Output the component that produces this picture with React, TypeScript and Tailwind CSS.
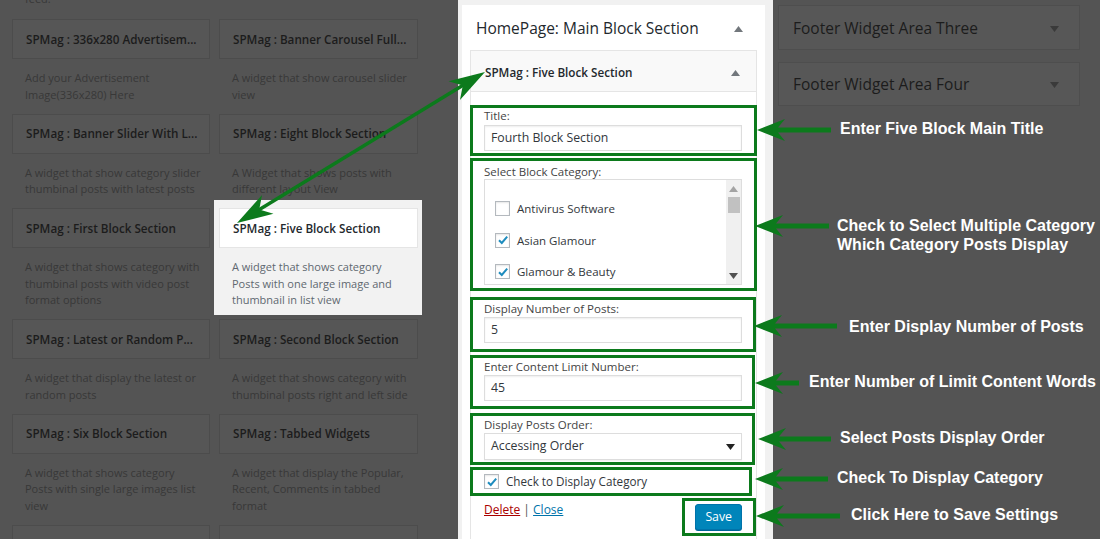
import React from 'react';

type Widget = { title: string; lines: string[]; active?: boolean };

const rows: Widget[][] = [
    [
        { title: 'SPMag : 336x280 Advertisem...', lines: ['Add your Advertisement', 'Image(336x280) Here'] },
        { title: 'SPMag : Banner Carousel Full...', lines: ['A widget that show carousel slider', 'view'] },
    ],
    [
        { title: 'SPMag : Banner Slider With L...', lines: ['A widget that show category slider', 'thumbinal posts with latest posts'] },
        { title: 'SPMag : Eight Block Section', lines: ['A Widget that shows posts with', 'different layout View'] },
    ],
    [
        { title: 'SPMag : First Block Section', lines: ['A widget that shows category with', 'thumbinal posts with video post', 'format options'] },
        { title: 'SPMag : Five Block Section', lines: ['A widget that shows category', 'Posts with one large image and', 'thumbnail in list view'], active: true },
    ],
    [
        { title: 'SPMag : Latest or Random P...', lines: ['A widget that display the latest or', 'random posts'] },
        { title: 'SPMag : Second Block Section', lines: ['A widget that shows category with', 'thumbinal posts right and left side'] },
    ],
    [
        { title: 'SPMag : Six Block Section', lines: ['A widget that shows category', 'Posts with single large images list', 'view'] },
        { title: 'SPMag : Tabbed Widgets', lines: ['A widget that display the Popular,', 'Recent, Comments in tabbed', 'format'] },
    ],
    // next row only shows the top of its cards
    [
        { title: '', lines: [] },
        { title: '', lines: [] },
    ],
];

const GREEN = '#0c7a1c';

const WidgetItem = ({ w }: { w: Widget }) => {
    if (w.active) {
        return (
            <div className="-mt-2 -ml-[5px] -mr-1 pt-2 pl-[5px] pr-1 bg-[#f2f2f2] self-start">
                <div className="h-10 border border-[#e5e5e5] bg-white flex items-center px-[13px] pt-px text-[11.7px] font-semibold text-[#23282d] whitespace-nowrap">
                    {w.title}
                </div>
                <div className="pt-[11px] pb-[6px] px-[13px] text-[11px] leading-[16.5px] text-[#606870] whitespace-nowrap">
                    {w.lines.map((l) => (
                        <div key={l}>{l}</div>
                    ))}
                </div>
            </div>
        );
    }
    return (
        <div>
            <div className="h-10 border border-[#4c4c4c] bg-[#565656] flex items-center px-[13px] pt-px text-[11.7px] font-semibold text-[#1c1c1c] whitespace-nowrap overflow-hidden">
                {w.title}
            </div>
            <div className="pt-[11px] pb-[10.5px] px-[13px] text-[11px] leading-[16.5px] text-[#383838] whitespace-nowrap">
                {w.lines.map((l) => (
                    <div key={l}>{l}</div>
                ))}
            </div>
        </div>
    );
};

const TriUp = ({ color = '#72777c' }: { color?: string }) => (
    <svg width="9" height="6" viewBox="0 0 9 6"><path d="M0 6 L4.5 0 L9 6 Z" fill={color} /></svg>
);
const TriDown = ({ color = '#3a3a3a' }: { color?: string }) => (
    <svg width="9" height="6" viewBox="0 0 9 6"><path d="M0 0 L4.5 6 L9 0 Z" fill={color} /></svg>
);

const Check = () => (
    <svg width="12" height="12" viewBox="0 0 12 12">
        <path d="M2 6.2 L4.8 9 L10.2 2.6" stroke="#1e8cbe" strokeWidth="2" fill="none" />
    </svg>
);

const CheckBox = ({ checked }: { checked?: boolean }) => (
    <span className="w-[15px] h-[15px] border border-[#b4b9be] bg-white shadow-[inset_0_1px_2px_rgba(0,0,0,0.1)] flex items-center justify-center shrink-0">
        {checked && <Check />}
    </span>
);

const TextInput = ({ value }: { value: string }) => (
    <div className="h-[26px] border border-[#dddddd] bg-white shadow-[inset_0_1px_2px_rgba(0,0,0,0.07)] flex items-center pl-[6px] text-[12.3px] text-[#32373c] whitespace-nowrap">
        {value}
    </div>
);

const Label = ({ text }: { text: string }) => (
    <div className="text-[11.5px] leading-[16px] text-[#444] whitespace-nowrap">{text}</div>
);

// horizontal arrow, tip on the left
const hArrow = (tx: number, y: number, x2: number) =>
    `${tx},${y} ${tx + 28},${y - 11} ${tx + 21},${y - 2.5} ${x2},${y - 2.5} ${x2},${y + 2.5} ${tx + 21},${y + 2.5} ${tx + 28},${y + 11}`;

const head = (tx: number, ty: number, fx: number, fy: number) => {
    const dx = fx - tx;
    const dy = fy - ty;
    const len = Math.hypot(dx, dy);
    const ux = dx / len;
    const uy = dy / len;
    const nx = -uy;
    const ny = ux;
    const L = 36;
    const W = 11;
    const N = 26;
    const p = (a: number, b: number) => `${tx + ux * a + nx * b},${ty + uy * a + ny * b}`;
    return `${p(0, 0)} ${p(L, W)} ${p(N, 0)} ${p(L, -W)}`;
};

const arrows = [
    { tx: 757, y: 130, x2: 831 },
    { tx: 755, y: 226, x2: 829 },
    { tx: 754, y: 326, x2: 837 },
    { tx: 755, y: 383, x2: 799 },
    { tx: 758, y: 439, x2: 831 },
    { tx: 755, y: 479, x2: 828 },
    { tx: 756, y: 516, x2: 840 },
];

const notes = [
    { text: 'Enter Five Block Main Title', cls: 'left-[840px] top-[120px]' },
    { text: 'Check to Select Multiple Category', cls: 'left-[837px] top-[217px]' },
    { text: 'Which Category Posts Display', cls: 'left-[837px] top-[236px]' },
    { text: 'Enter Display Number of Posts', cls: 'left-[849px] top-[318px]' },
    { text: 'Enter Number of Limit Content Words', cls: 'left-[809px] top-[373px]' },
    { text: 'Select Posts Display Order', cls: 'left-[840px] top-[429px]' },
    { text: 'Check To Display Category', cls: 'left-[837px] top-[469px]' },
    { text: 'Click Here to Save Settings', cls: 'left-[851px] top-[506px]' },
];

const App: React.FC = () => {
    const A = { x: 485, y: 72 };
    const B = { x: 237, y: 223 };

    return (
        <div className="relative w-[1100px] h-[539px] overflow-hidden bg-[#545454] flex font-['Open_Sans',sans-serif]">
            {/* available widgets */}
            <div className="w-[458px] shrink-0 pl-3">
                <div className="-mt-[9px] h-[28px] pl-[13px] text-[11px] leading-[16.5px] text-[#383838]">feed.</div>
                <div className="grid grid-cols-[198px_199px] gap-x-[9px]">
                    {rows.map((r, i) => (
                        <React.Fragment key={i}>
                            <WidgetItem w={r[0]} />
                            <WidgetItem w={r[1]} />
                        </React.Fragment>
                    ))}
                </div>
            </div>

            {/* sidebar with open widget */}
            <div className="w-[315px] shrink-0 bg-[#f1f1f1] pl-1 pr-2 pt-[5px]">
                <div className="bg-white h-full px-2">
                    <div className="h-[45px] flex items-center justify-between pl-[6px] pr-[14px] pt-[2px]">
                        <h2 className="text-[15.5px] text-[#23282d] whitespace-nowrap">HomePage: Main Block Section</h2>
                        <TriUp />
                    </div>
                    <div className="border-x border-[#e5e5e5] h-full">
                        <div className="h-[42px] bg-[#f9f9f9] border border-[#e5e5e5] -mx-px flex items-center justify-between pl-[14px] pr-[16px] pt-[3px]">
                            <span className="text-[11.7px] font-semibold text-[#23282d]">SPMag : Five Block Section</span>
                            <TriUp />
                        </div>

                        <div className="-mx-px">
                            <div className="mt-[13px] border-[3px] pl-[11px] pr-[12px] pb-[2px]" style={{ borderColor: GREEN }}>
                                <Label text="Title:" />
                                <div className="mt-px">
                                    <TextInput value="Fourth Block Section" />
                                </div>
                            </div>

                            <div className="mt-[2px] border-[3px] pl-[11px] pr-[12px] pt-[4px] pb-[3px]" style={{ borderColor: GREEN }}>
                                <div className="text-[11.5px] leading-[14px] text-[#444]">Select Block Category:</div>
                                <div className="h-[106px] border border-[#dddddd] bg-white flex">
                                    <div className="flex-1 pt-[13px] pl-[10px]">
                                        {[
                                            { t: 'Antivirus Software', c: false },
                                            { t: 'Asian Glamour', c: true },
                                            { t: 'Glamour & Beauty', c: true },
                                        ].map((it) => (
                                            <div key={it.t} className="h-[31.5px] flex items-center gap-[7px] text-[11.5px] text-[#32373c] whitespace-nowrap">
                                                <CheckBox checked={it.c} />
                                                {it.t}
                                            </div>
                                        ))}
                                    </div>
                                    <div className="w-[15px] bg-[#f0f0f0] flex flex-col items-center pt-[6px] pb-[5px]">
                                        <TriUp color="#a3a3a3" />
                                        <div className="mt-[5px] w-[12px] h-[16px] bg-[#c1c1c1]" />
                                        <div className="flex-1" />
                                        <TriDown color="#505050" />
                                    </div>
                                </div>
                            </div>

                            <div className="mt-[6px] mr-[1px] border-[3px] pl-[11px] pr-[11px] pt-[1px] pb-[6px]" style={{ borderColor: GREEN }}>
                                <Label text="Display Number of Posts:" />
                                <TextInput value="5" />
                            </div>

                            <div className="mt-[3px] mr-[2px] border-[3px] pl-[11px] pr-[10px] pt-[1px] pb-[5px]" style={{ borderColor: GREEN }}>
                                <Label text="Enter Content Limit Number:" />
                                <TextInput value="45" />
                            </div>

                            <div className="mt-[4px] mr-[2px] border-[3px] pl-[11px] pr-[10px] pt-[1px] pb-[2px]" style={{ borderColor: GREEN }}>
                                <Label text="Display Posts Order:" />
                                <div className="h-[27px] border border-[#dddddd] bg-white shadow-[0_1px_1px_rgba(0,0,0,0.04)] flex items-center justify-between pl-[6px] pr-[6px] text-[12.3px] text-[#32373c]">
                                    Accessing Order
                                    <TriDown color="#222" />
                                </div>
                            </div>

                            <div className="mt-[2px] mr-[5px] h-[29px] border-[3px] pl-[11px] flex items-center gap-[7px] text-[11.7px] text-[#32373c] whitespace-nowrap" style={{ borderColor: GREEN }}>
                                <CheckBox checked />
                                Check to Display Category
                            </div>

                            <div className="mt-[2px] flex justify-between">
                                <div className="pl-[14px] pt-[4px] text-[12px] leading-[16px] text-[#555]">
                                    <span className="text-[#a00] underline">Delete</span> | <span className="text-[#0073aa] underline">Close</span>
                                </div>
                                <div className="mr-px border-[3px] pl-[10px] pr-[11px] pt-[2px] pb-[3px]" style={{ borderColor: GREEN }}>
                                    <button className="h-[26px] px-[9px] rounded-[3px] bg-[#0085ba] border border-[#0073aa] shadow-[0_1px_0_#006799] text-white text-[12.3px]">
                                        Save
                                    </button>
                                </div>
                            </div>
                        </div>
                    </div>
                </div>
            </div>

            {/* other sidebars */}
            <div className="flex-1 pl-[5px] pr-[20px] pt-[5px]">
                <div className="h-[45px] border border-[#4e4e4e] bg-[#575757] flex items-center justify-between pl-[14px] pr-[20px] pt-[2px]">
                    <span className="text-[15.5px] text-[#1c1c1c] whitespace-nowrap">Footer Widget Area Three</span>
                    <TriDown />
                </div>
                <div className="mt-[12px] h-[44px] border border-[#4e4e4e] bg-[#575757] flex items-center justify-between pl-[14px] pr-[20px] pt-[2px]">
                    <span className="text-[15.5px] text-[#1c1c1c] whitespace-nowrap">Footer Widget Area Four</span>
                    <TriDown />
                </div>
            </div>

            {/* annotation overlay */}
            <svg className="absolute inset-0 pointer-events-none" width="1100" height="539" viewBox="0 0 1100 539">
                {arrows.map((a) => (
                    <polygon key={a.y} points={hArrow(a.tx, a.y, a.x2)} fill={GREEN} />
                ))}
                <line x1={A.x - 20} y1={A.y + 12} x2={B.x + 20} y2={B.y - 12} stroke={GREEN} strokeWidth="3.5" />
                <polygon points={head(A.x, A.y, B.x, B.y)} fill={GREEN} />
                <polygon points={head(B.x, B.y, A.x, A.y)} fill={GREEN} />
            </svg>
            {notes.map((n) => (
                <div
                    key={n.text}
                    className={`absolute ${n.cls} text-[16px] leading-[18px] font-bold text-white whitespace-nowrap font-['Liberation_Sans',Arial,sans-serif]`}
                >
                    {n.text}
                </div>
            ))}
        </div>
    );
};

export default App;
